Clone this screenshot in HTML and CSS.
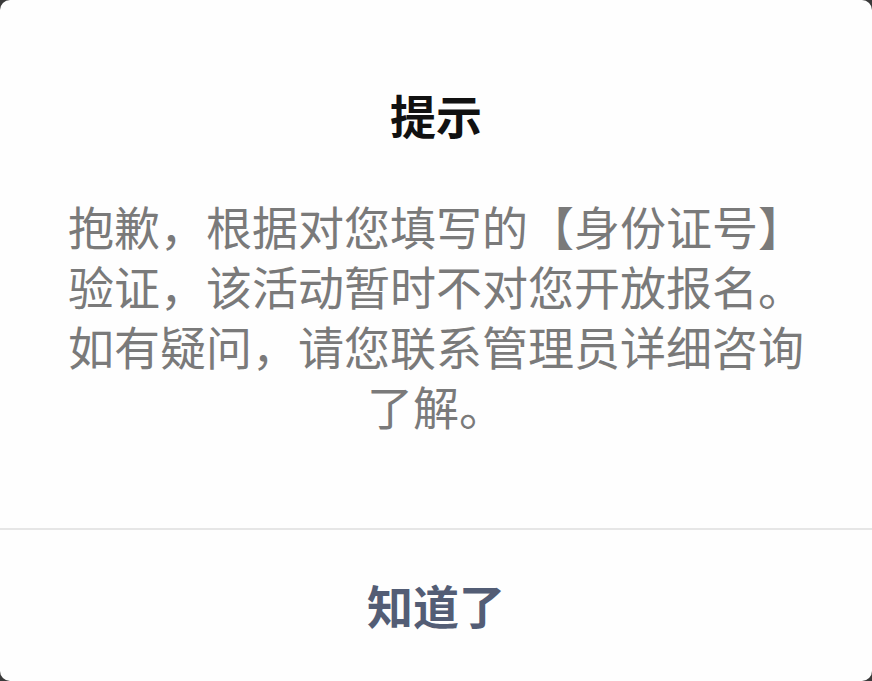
FILE: index.html
```html
<!DOCTYPE html>
<html lang="zh-CN">
<head>
<meta charset="utf-8">
<title>提示</title>
<link rel="stylesheet" href="styles.css">
</head>
<body>
<div class="dialog">
  <div class="dialog-main">
    <div class="dialog-title">提示</div>
    <div class="dialog-body">抱歉，根据对您填写的【身份证号】验证，该活动暂时不对您开放报名。如有疑问，请您联系管理员详细咨询了解。</div>
  </div>
  <div class="dialog-footer">
    <button class="dialog-btn" type="button">知道了</button>
  </div>
</div>
</body>
</html>
```

FILE: styles.css
```css
html, body {
  margin: 0;
  padding: 0;
  height: 100%;
  background: #3a3a3a;
}
body {
  font-family: "Noto Sans CJK SC", "Noto Sans", sans-serif;
}
.dialog {
  height: 100%;
  box-sizing: border-box;
  background: #fefefe;
  border-radius: 10px;
  display: flex;
  flex-direction: column;
  overflow: hidden;
}
.dialog-main {
  padding: 84px 50px 93px;
  border-bottom: 2px solid #e6e6e6;
}
.dialog-title {
  font-size: 46px;
  line-height: 60px;
  font-weight: 700;
  color: #111;
  text-align: center;
}
.dialog-body {
  margin-top: 51px;
  font-size: 46px;
  line-height: 60px;
  color: #7a7a7a;
  text-align: center;
}
.dialog-footer {
  flex: 1;
  display: flex;
  align-items: center;
  justify-content: center;
  padding-bottom: 4px;
}
.dialog-btn {
  border: 0;
  background: transparent;
  font-family: inherit;
  font-size: 46px;
  line-height: 60px;
  font-weight: 700;
  color: #535d75;
  padding: 0;
}
```
